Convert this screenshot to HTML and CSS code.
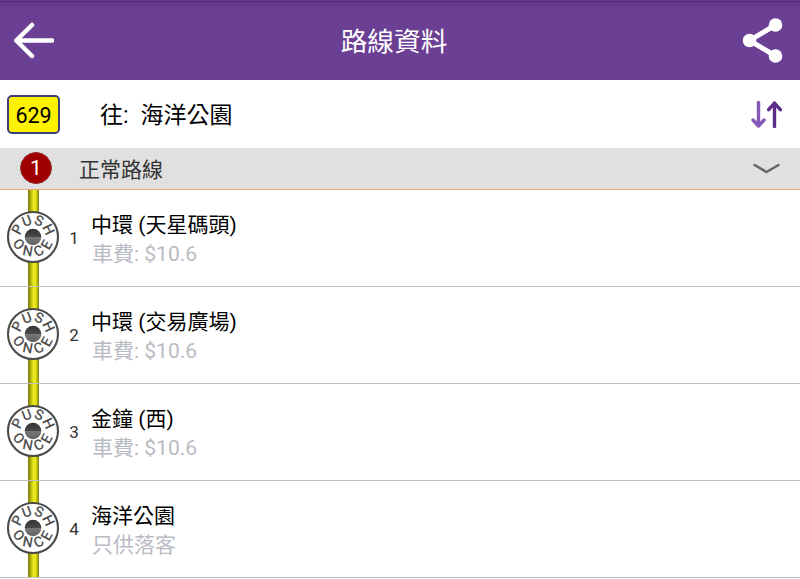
FILE: index.html
```html
<!DOCTYPE html>
<html lang="zh-Hant">

<head>
  <meta charset="utf-8" />
  <title>路線資料</title>
  <meta name="viewport" content="width=device-width, initial-scale=1" />
  <link rel="stylesheet" href="styles.css">
</head>

<body>
  <!-- bus bell button, used by every stop -->
  <svg class="defs" width="0" height="0">
    <defs>
      <linearGradient id="hole" x1="0" y1="0" x2="0" y2="1">
        <stop offset="0" stop-color="#333" />
        <stop offset="0.48" stop-color="#494949" />
        <stop offset="0.52" stop-color="#777" />
        <stop offset="1" stop-color="#606060" />
      </linearGradient>
      <path id="arc-top" d="M-12.5 0A12.5 12.5 0 0 1 12.5 0" />
      <path id="arc-bottom" d="M-21.5 -2A21.5 21.5 0 0 0 21.5 -2" />
      <symbol id="bell" viewBox="-27 -27 54 54">
        <circle r="25" fill="#fff" stroke="#4a4a4a" stroke-width="2.1" />
        <circle r="8.3" fill="url(#hole)" />
        <text class="bell-text push"><textPath href="#arc-top" startOffset="51%">PUSH</textPath></text>
        <text class="bell-text once"><textPath href="#arc-bottom" startOffset="53%">ONCE</textPath></text>
      </symbol>
    </defs>
  </svg>

  <div class="header">
    <svg class="back" width="42" height="40" viewBox="0 0 42 40">
      <path d="M20 4L4.3 19.5L20 35M4.3 19.5H40" />
    </svg>
    <h1 class="titulo">路線資料</h1>
    <svg class="share" width="42" height="46" viewBox="0 0 42 46">
      <path d="M33.5 7L7.5 22.5L33.5 38" />
      <circle cx="33.5" cy="7" r="6.8" />
      <circle cx="7.5" cy="22.5" r="6.8" />
      <circle cx="33.5" cy="38" r="6.8" />
    </svg>
  </div>

  <div class="route">
    <div class="route-number">629</div>
    <div class="route-dest"><span class="to">往:</span>海洋公園</div>
    <svg class="swap" width="32" height="28" viewBox="0 0 32 28">
      <path class="down" d="M7.5 2.5V26M2 20L7.5 26L13 20" />
      <path class="up" d="M23.5 26.5V3M17.7 9.7L23.5 3L29.3 9.7" />
    </svg>
  </div>

  <div class="variant">
    <div class="variant-badge">1</div>
    <div class="variant-name">正常路線</div>
    <svg class="chevron" width="28" height="12" viewBox="0 0 28 12">
      <path d="M2.5 2L14.5 9L26.5 2" />
    </svg>
  </div>

  <div class="stops">
    <div class="stop">
      <div class="track"><svg width="54" height="54"><use href="#bell" /></svg></div>
      <div class="index">1</div>
      <div class="info">
        <div class="name">中環 (天星碼頭)</div>
        <div class="fare">車費: $10.6</div>
      </div>
    </div>
    <div class="stop">
      <div class="track"><svg width="54" height="54"><use href="#bell" /></svg></div>
      <div class="index">2</div>
      <div class="info">
        <div class="name">中環 (交易廣場)</div>
        <div class="fare">車費: $10.6</div>
      </div>
    </div>
    <div class="stop">
      <div class="track"><svg width="54" height="54"><use href="#bell" /></svg></div>
      <div class="index">3</div>
      <div class="info">
        <div class="name">金鐘 (西)</div>
        <div class="fare">車費: $10.6</div>
      </div>
    </div>
    <div class="stop">
      <div class="track"><svg width="54" height="54"><use href="#bell" /></svg></div>
      <div class="index">4</div>
      <div class="info">
        <div class="name">海洋公園</div>
        <div class="fare">只供落客</div>
      </div>
    </div>
  </div>
</body>

</html>
```
FILE: styles.css
```css
* {
  box-sizing: border-box;
}

body {
  margin: 0;
  background: #fff;
  color: #000;
  font-family: Roboto, "Noto Sans CJK TC", sans-serif;
  overflow: hidden;
}

svg {
  display: block;
  fill: none;
}

.defs {
  position: absolute;
}

.header {
  display: grid;
  grid-template-columns: 60px 1fr 60px;
  align-items: center;
  height: 80px;
  padding: 2px 0 1px;
  background: linear-gradient(#65398c 0, #65398c 1px, #4f2b72 1px, #4f2b72 2px, #643989 2px, #6b3f94 12px);
}

.back {
  margin-left: 12px;
  stroke: #fff;
  stroke-width: 4.5;
  stroke-linecap: round;
  stroke-linejoin: round;
}

.titulo {
  margin: 2px 0 0 -12px;
  color: #fff;
  font-size: 26.7px;
  font-weight: 400;
  line-height: 40px;
  text-align: center;
}

.share {
  margin-left: 2px;
  stroke: #fff;
  stroke-width: 5;
}

.share circle {
  fill: #fff;
  stroke: none;
}

.route {
  display: flex;
  align-items: center;
  height: 68px;
  padding: 0 17px 0 7px;
}

.route-number {
  width: 53px;
  height: 39px;
  border: 2px solid #3d3d80;
  border-radius: 5px;
  background: #fff200;
  font-size: 21.5px;
  line-height: 37px;
  text-align: center;
}

.route-dest {
  flex: 1;
  margin-left: 40px;
  padding-top: 3px;
  font-size: 23px;
  line-height: 34px;
}

.to {
  margin-right: 12px;
}

.swap {
  stroke-width: 3.4;
  stroke-linecap: round;
  stroke-linejoin: round;
}

.down {
  stroke: #8557b8;
}

.up {
  stroke: #5b2d88;
}

.variant {
  display: flex;
  align-items: center;
  height: 42px;
  padding: 0 20px;
  border-bottom: 1px solid #f0a673;
  background: #e0e0e0;
}

.variant-badge {
  width: 32px;
  height: 32px;
  margin-bottom: 1px;
  border: 1px solid #8c3030;
  border-radius: 50%;
  background: #a00000;
  color: #fff;
  font-size: 21px;
  line-height: 31px;
  text-align: center;
}

.variant-name {
  flex: 1;
  margin-left: 27px;
  padding-top: 2px;
  color: #333;
  font-size: 21px;
  line-height: 32px;
}

.chevron {
  stroke: #666;
  stroke-width: 2.6;
  stroke-linecap: round;
  stroke-linejoin: round;
}

.stop {
  display: flex;
  height: 97px;
  border-bottom: 1px solid #c0c0c0;
}

.track {
  width: 54px;
  margin-left: 6px;
  padding-top: 20px;
  background: linear-gradient(to right, #77770c, #a5a50e 20%, #e2e214 45%, #eded20 65%, #c5c510 80%, #77770c) 22px 0 / 11px 100% no-repeat;
}

.bell-text {
  fill: #444;
  stroke: #444;
  stroke-width: 0.25;
  font-size: 14px;
  text-anchor: middle;
}

.push {
  letter-spacing: 0.3px;
}

.once {
  letter-spacing: 4.5px;
}

.index {
  width: 28px;
  color: #333;
  font-size: 17px;
  line-height: 97px;
  text-align: center;
}

.info {
  margin-left: 3px;
  padding-top: 21px;
}

.name {
  font-size: 21px;
  line-height: 29px;
}

.fare {
  padding-left: 1px;
  color: #b9bbc4;
  font-size: 21px;
  line-height: 29px;
}
```
